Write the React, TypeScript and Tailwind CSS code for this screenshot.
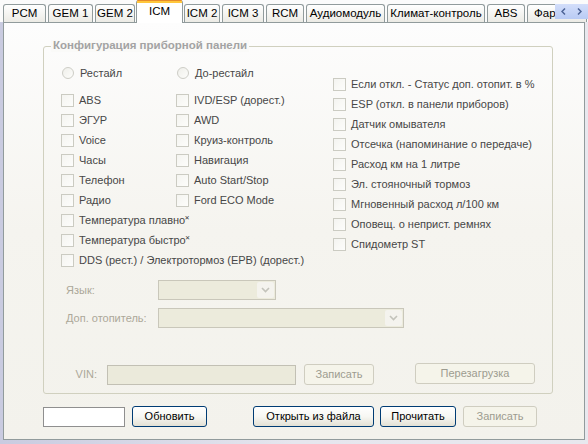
import React from "react";

const tabs = [
  { label: "PCM", w: 43 },
  { label: "GEM 1", w: 45 },
  { label: "GEM 2", w: 40 },
  { label: "ICM", w: 45, active: true },
  { label: "ICM 2", w: 36 },
  { label: "ICM 3", w: 42 },
  { label: "RCM", w: 38 },
  { label: "Аудиомодуль", w: 79 },
  { label: "Климат-контроль", w: 98 },
  { label: "ABS", w: 38 },
  { label: "Фары", w: 60, left: true },
];

const col1 = ["ABS", "ЭГУР", "Voice", "Часы", "Телефон", "Радио", "Температура плавно˟", "Температура быстро˟", "DDS (рест.) / Электротормоз (EPB) (дорест.)"];
const col2 = ["IVD/ESP (дорест.)", "AWD", "Круиз-контроль", "Навигация", "Auto Start/Stop", "Ford ECO Mode"];
const col3 = [
  "Если откл. - Статус доп. отопит. в %",
  "ESP (откл. в панели приборов)",
  "Датчик омывателя",
  "Отсечка (напоминание о передаче)",
  "Расход км на 1 литре",
  "Эл. стояночный тормоз",
  "Мгновенный расход л/100 км",
  "Оповещ. о неприст. ремнях",
  "Спидометр ST",
];

function Check({ label }: { label: string }) {
  return (
    <div className="flex h-[20px] items-center whitespace-nowrap">
      <span className="h-[13px] w-[13px] shrink-0 border border-[#cbcbc2] bg-gradient-to-br from-[#f4f4f0] to-[#fdfdfb]" />
      <span className="ml-[5px] text-[#474747]">{label}</span>
    </div>
  );
}

function Radio({ label }: { label: string }) {
  return (
    <div className="flex h-[20px] w-[115px] items-center whitespace-nowrap">
      <span className="ml-px h-[12px] w-[12px] shrink-0 rounded-full border border-[#cdcdc6] bg-gradient-to-br from-[#efefea] to-[#fdfdfb]" />
      <span className="ml-[6px] text-[#474747]">{label}</span>
    </div>
  );
}

function Combo({ w }: { w: number }) {
  return (
    <div
      className="flex h-[20px] items-stretch border border-[#c9c7ba] bg-[#ecebdc] p-px"
      style={{ width: w }}
    >
      <div className="flex-1" />
      <div className="flex w-[17px] items-center justify-center rounded-[2px] bg-[#f4f3ee]">
        <svg width="9" height="6" viewBox="0 0 9 6">
          <path d="M1 1l3.5 3.5L8 1" stroke="#c3c3bb" strokeWidth="1.6" fill="none" />
        </svg>
      </div>
    </div>
  );
}

function Btn({ label, w, disabled }: { label: string; w: number; disabled?: boolean }) {
  return (
    <div
      className={
        disabled
          ? "flex h-[21px] items-center justify-center rounded-[3px] border border-[#cfcdc0] bg-[#f5f4ea] text-[#9d9c90]"
          : "flex h-[21px] items-center justify-center rounded-[3px] border border-[#003c74] bg-gradient-to-b from-white via-[#f7f7f3] to-[#e3e1d5] text-black"
      }
      style={{ width: w }}
    >
      {label}
    </div>
  );
}

export default function App() {
  return (
    <div className="h-[444px] w-[588px] overflow-hidden bg-gradient-to-r from-[#c9cbe0] via-[#e6e6ee] to-[#e8e8ee] font-['Liberation_Sans',Arial,sans-serif] text-[11px] leading-none">
      <div className="relative h-[22px] bg-[#fbfbfb]">
        <div className="flex h-[22px] items-end gap-[2px] pl-[3px]">
          {tabs.map((t) =>
            t.active ? (
              <div
                key={t.label}
                className="relative z-10 -mb-px -mx-px flex h-[23px] shrink-0 flex-col rounded-t-[3px] border-x border-[#919b9c] bg-white"
                style={{ width: t.w + 2 }}
              >
                <div className="h-px rounded-t-[3px] bg-[#e68b2c]" />
                <div className="h-[2px] bg-[#ffc73c]" />
                <div className="flex flex-1 items-start justify-center pt-[3px] text-[11.5px] text-black">{t.label}</div>
              </div>
            ) : (
              <div
                key={t.label}
                className={
                  t.left
                    ? "flex h-[18px] shrink-0 items-center justify-start overflow-hidden whitespace-nowrap rounded-t-[3px] border-x border-t border-[#919b9c] bg-gradient-to-b from-white to-[#ecebe5] pl-[6px] text-[11.5px] text-black"
                    : "flex h-[18px] shrink-0 items-center justify-center overflow-hidden whitespace-nowrap rounded-t-[3px] border-x border-t border-[#919b9c] bg-gradient-to-b from-white to-[#ecebe5] text-[11.5px] text-black"
                }
                style={{ width: t.w }}
              >
                {t.label}
              </div>
            )
          )}
        </div>
        <div className="absolute right-0 top-[4px] flex h-[15px] w-[33px] items-center justify-around bg-gradient-to-b from-[#d3defa] to-[#b9cbf4]">
          <svg width="5" height="7" viewBox="0 0 5 7"><path d="M4 0.5L1 3.5L4 6.5" stroke="#4d6395" strokeWidth="1.5" fill="none" /></svg>
          <svg width="5" height="7" viewBox="0 0 5 7"><path d="M1 0.5L4 3.5L1 6.5" stroke="#4d6395" strokeWidth="1.5" fill="none" /></svg>
        </div>
      </div>

      <div className="ml-[3px] h-[418px] w-[582px] border border-[#919b9c] bg-gradient-to-b from-[#fdfdfd] via-[#f5f4ef] to-[#f3f2ec] pl-[39px] pt-[23px]">
        <div className="relative h-[348px] w-[510px] rounded-[3px] border border-[#d0d0bf] pt-[16px]">
          <div className="absolute left-[7px] top-[-7px] bg-[#fafaf8] px-[2px] text-[11.5px] font-bold text-[#a3a3a3]">
            Конфигурация приборной панели
          </div>

          <div className="flex pl-[17px]">
            <div className="flex w-[272px] flex-col">
              <div className="flex">
                <Radio label="Рестайл" />
                <Radio label="До-рестайл" />
              </div>
              <div className="mt-[7px] flex">
                <div className="flex w-[115px] flex-col">
                  {col1.map((l) => (
                    <Check key={l} label={l} />
                  ))}
                </div>
                <div className="flex flex-col">
                  {col2.map((l) => (
                    <Check key={l} label={l} />
                  ))}
                </div>
              </div>
            </div>
            <div className="mt-[11px] flex flex-col">
              {col3.map((l) => (
                <Check key={l} label={l} />
              ))}
            </div>
          </div>

          <div className="mt-[10px] flex items-center pl-[22px] text-[#aca899]">
            <div className="w-[92px]">Язык:</div>
            <Combo w={118} />
          </div>
          <div className="mt-[8px] flex items-center pl-[22px] text-[#aca899]">
            <div className="w-[92px]">Доп. отопитель:</div>
            <Combo w={246} />
          </div>

          <div className="mt-[36px] flex items-center pl-[22px]">
            <div className="w-[31px] text-right text-[#aca899]">VIN:</div>
            <div className="ml-[10px] h-[20px] w-[189px] border border-[#c2c0b4] bg-[#ebeadb]" />
            <div className="ml-[8px]">
              <Btn label="Записать" w={70} disabled />
            </div>
            <div className="ml-[41px] -mt-[2px]">
              <Btn label="Перезагрузка" w={120} disabled />
            </div>
          </div>
        </div>

        <div className="mt-[12px] flex items-center">
          <div className="h-[20px] w-[82px] border border-[#8f8f8f] bg-white" />
          <div className="ml-[7px]">
            <Btn label="Обновить" w={75} />
          </div>
          <div className="ml-[46px]">
            <Btn label="Открыть из файла" w={121} />
          </div>
          <div className="ml-[6px]">
            <Btn label="Прочитать" w={76} />
          </div>
          <div className="ml-[7px]">
            <Btn label="Записать" w={74} disabled />
          </div>
        </div>
      </div>
    </div>
  );
}
